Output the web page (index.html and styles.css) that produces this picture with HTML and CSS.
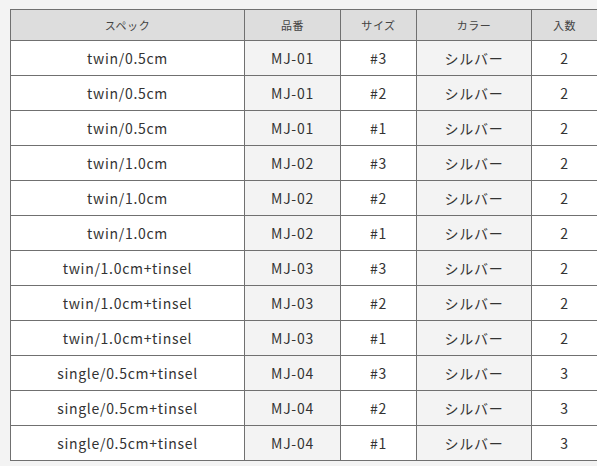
FILE: index.html
```html
<!DOCTYPE html>
<html lang="ja">
<head>
<meta charset="utf-8">
<link rel="stylesheet" href="styles.css">
</head>
<body>
<div class="wrap">
<table class="spec">
<colgroup>
<col class="c1"><col class="c2"><col class="c3"><col class="c4"><col class="c5">
</colgroup>
<thead>
<tr><th>スペック</th><th>品番</th><th>サイズ</th><th>カラー</th><th>入数</th></tr>
</thead>
<tbody>
<tr><td>twin/0.5cm</td><td class="g">MJ-01</td><td>#3</td><td class="g">シルバー</td><td>2</td></tr>
<tr><td>twin/0.5cm</td><td class="g">MJ-01</td><td>#2</td><td class="g">シルバー</td><td>2</td></tr>
<tr><td>twin/0.5cm</td><td class="g">MJ-01</td><td>#1</td><td class="g">シルバー</td><td>2</td></tr>
<tr><td>twin/1.0cm</td><td class="g">MJ-02</td><td>#3</td><td class="g">シルバー</td><td>2</td></tr>
<tr><td>twin/1.0cm</td><td class="g">MJ-02</td><td>#2</td><td class="g">シルバー</td><td>2</td></tr>
<tr><td>twin/1.0cm</td><td class="g">MJ-02</td><td>#1</td><td class="g">シルバー</td><td>2</td></tr>
<tr><td>twin/1.0cm+tinsel</td><td class="g">MJ-03</td><td>#3</td><td class="g">シルバー</td><td>2</td></tr>
<tr><td>twin/1.0cm+tinsel</td><td class="g">MJ-03</td><td>#2</td><td class="g">シルバー</td><td>2</td></tr>
<tr><td>twin/1.0cm+tinsel</td><td class="g">MJ-03</td><td>#1</td><td class="g">シルバー</td><td>2</td></tr>
<tr><td>single/0.5cm+tinsel</td><td class="g">MJ-04</td><td>#3</td><td class="g">シルバー</td><td>3</td></tr>
<tr><td>single/0.5cm+tinsel</td><td class="g">MJ-04</td><td>#2</td><td class="g">シルバー</td><td>3</td></tr>
<tr><td>single/0.5cm+tinsel</td><td class="g">MJ-04</td><td>#1</td><td class="g">シルバー</td><td>3</td></tr>
</tbody>
</table>
</div>
</body>
</html>
```
FILE: styles.css
```css
html, body {
  margin: 0;
  padding: 0;
  background: #f3f3f3;
}
.wrap {
  padding: 9px 0 0 10px;
}
.spec {
  border-collapse: collapse;
  table-layout: fixed;
  width: 587px;
  font-family: "Noto Sans CJK JP", "Noto Sans", sans-serif;
  color: #333;
}
.c1 { width: 234px; }
.c2 { width: 96px; }
.c3 { width: 76px; }
.c4 { width: 115px; }
.c5 { width: 66px; }
.spec th, .spec td {
  border: 1px solid #707070;
  text-align: center;
  padding: 0;
  white-space: nowrap;
}
.spec th {
  background: #dddddd;
  font-weight: normal;
  font-size: 11px;
  letter-spacing: 0.05em;
  color: #444;
  height: 30px;
}
.spec td {
  background: #fff;
  font-size: 14px;
  letter-spacing: 0.05em;
  height: 34px;
}
.spec td.g {
  background: #f3f3f3;
}
```
